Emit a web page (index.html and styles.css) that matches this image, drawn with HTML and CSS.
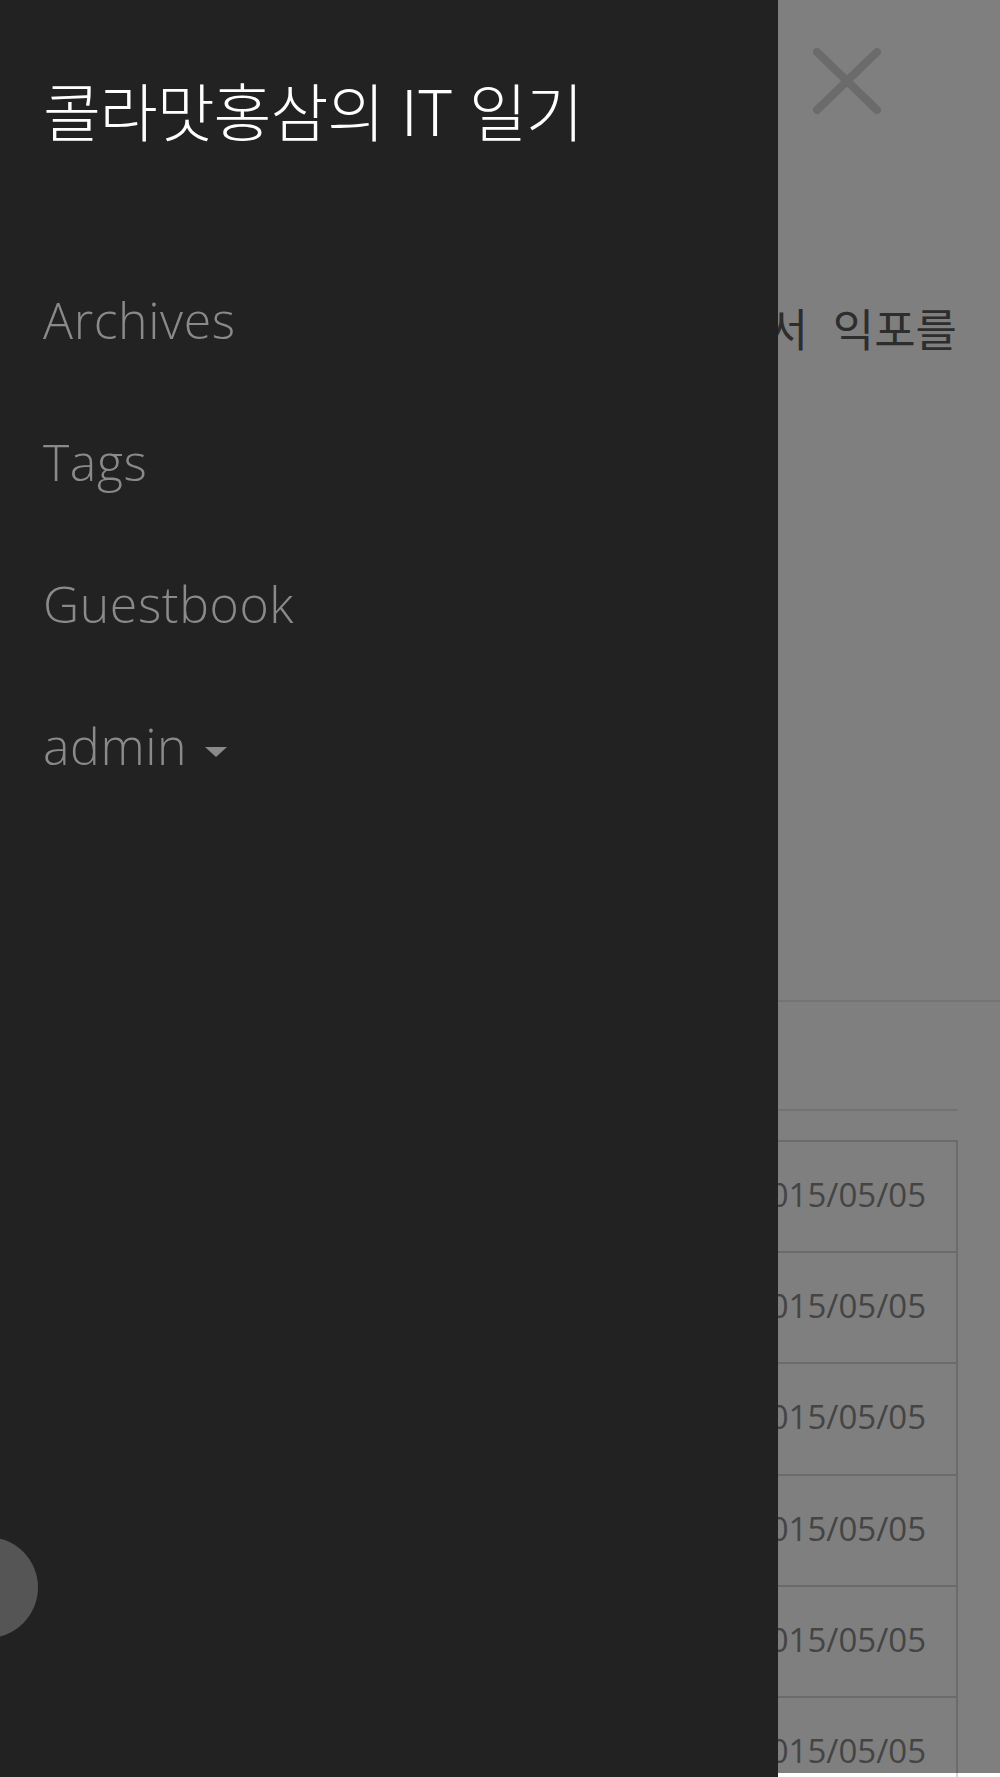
FILE: index.html
```html
<!DOCTYPE html>
<html lang="ko">
<head>
<meta charset="utf-8">
<title>콜라맛홍삼의 IT 일기</title>
<link rel="stylesheet" href="styles.css">
</head>
<body>
<div class="page">
  <section class="post-intro">
    <p class="excerpt">내보내기 기능을 만들면서 익포를</p>
  </section>
  <hr class="section-divider">
  <section class="post-list">
    <h2 class="list-title">최근 글 목록</h2>
    <div class="post-table">
      <div class="post-row"><span class="post-name">엑셀 익스포트 정리</span><span class="post-date">2015/05/05</span></div>
      <div class="post-row"><span class="post-name">스프링 설정 메모</span><span class="post-date">2015/05/05</span></div>
      <div class="post-row"><span class="post-name">자바스크립트 정리</span><span class="post-date">2015/05/05</span></div>
      <div class="post-row"><span class="post-name">리눅스 명령어</span><span class="post-date">2015/05/05</span></div>
      <div class="post-row"><span class="post-name">데이터베이스 튜닝</span><span class="post-date">2015/05/05</span></div>
      <div class="post-row"><span class="post-name">블로그 시작</span><span class="post-date">2015/05/05</span></div>
    </div>
  </section>
</div>

<div class="overlay">
  <button class="close-btn" type="button" aria-label="닫기">
    <svg width="68" height="68" viewBox="0 0 68 68" aria-hidden="true">
      <path d="M4 4 L64 62 M64 4 L4 62" stroke="#6b6b6b" stroke-width="8" stroke-linecap="round" fill="none"/>
    </svg>
  </button>
</div>

<aside class="sidebar">
  <h1 class="blog-title">콜라맛홍삼의 IT 일기</h1>
  <nav>
    <ul class="nav-list">
      <li><a class="nav-link" href="#">Archives</a></li>
      <li><a class="nav-link" href="#">Tags</a></li>
      <li><a class="nav-link" href="#">Guestbook</a></li>
      <li><a class="nav-link" href="#">admin <span class="caret"></span></a></li>
    </ul>
  </nav>
</aside>

<div class="top-btn"></div>
</body>
</html>
```

FILE: styles.css
```css
html, body {
  margin: 0;
  padding: 0;
  background: #ffffff;
}

body {
  font-family: "Open Sans", "Noto Sans CJK KR", sans-serif;
  overflow: hidden;
  height: 1777px;
}

.page {
  width: 1000px;
}

.post-intro {
  padding: 296px 43px 0 44px;
}

.excerpt {
  margin: 0;
  font-family: "Noto Sans CJK KR", sans-serif;
  font-size: 45px;
  line-height: 63px;
  word-spacing: 12px;
  color: #5a5a5a;
  text-align: right;
  white-space: nowrap;
}

.section-divider {
  margin: 641px 0 0 0;
  border: 0;
  border-top: 2px solid #e8e8e8;
  height: 0;
}

.post-list {
  padding: 0 42px 0 43px;
}

.list-title {
  margin: 0;
  height: 109px;
  box-sizing: border-box;
  border-bottom: 2px solid #e6e6e6;
  font-family: "Noto Sans CJK KR", sans-serif;
  font-size: 36px;
  font-weight: 400;
  line-height: 109px;
  color: #555;
}

.post-table {
  margin-top: 29px;
  border: 2px solid #d6d6d6;
  border-bottom: 0;
}

.post-row {
  height: 111.2px;
  box-sizing: border-box;
  border-bottom: 2px solid #d6d6d6;
  display: flex;
  align-items: center;
  justify-content: space-between;
  padding: 0 30px 4px 30px;
}

.post-name {
  font-family: "Noto Sans CJK KR", sans-serif;
  font-size: 33px;
  color: #666;
}

.post-date {
  font-family: "Open Sans", sans-serif;
  font-size: 33px;
  color: #898989;
}

.overlay {
  position: fixed;
  left: 0;
  right: 0;
  top: 0;
  bottom: 4px;
  background: rgba(0, 0, 0, 0.5);
}

.close-btn {
  position: absolute;
  left: 813px;
  top: 48px;
  width: 68px;
  height: 68px;
  padding: 0;
  margin: 0;
  border: 0;
  background: transparent;
}

.close-btn svg {
  display: block;
}

.sidebar {
  position: fixed;
  left: 0;
  top: 0;
  bottom: 0;
  width: 778px;
  background: #222222;
  box-sizing: border-box;
  padding: 71px 0 0 43px;
}

.blog-title {
  margin: 0;
  font-family: "Noto Sans CJK KR", sans-serif;
  font-size: 63px;
  font-weight: 300;
  line-height: 75px;
  letter-spacing: -1.1px;
  color: #ffffff;
  white-space: nowrap;
}

.nav-list {
  list-style: none;
  margin: 103px 0 0 0;
  padding: 0;
}

.nav-link {
  display: block;
  font-family: "Open Sans", sans-serif;
  font-weight: 300;
  font-size: 50px;
  line-height: 142px;
  letter-spacing: 0.6px;
  color: #8a8a8a;
  text-decoration: none;
}

.caret {
  display: inline-block;
  width: 0;
  height: 0;
  margin-left: 4px;
  vertical-align: middle;
  border-top: 10px solid #8a8a8a;
  border-left: 11px solid transparent;
  border-right: 11px solid transparent;
}

.top-btn {
  position: fixed;
  left: -63px;
  bottom: 139px;
  width: 101px;
  height: 101px;
  border-radius: 50%;
  background: #555555;
}
```
